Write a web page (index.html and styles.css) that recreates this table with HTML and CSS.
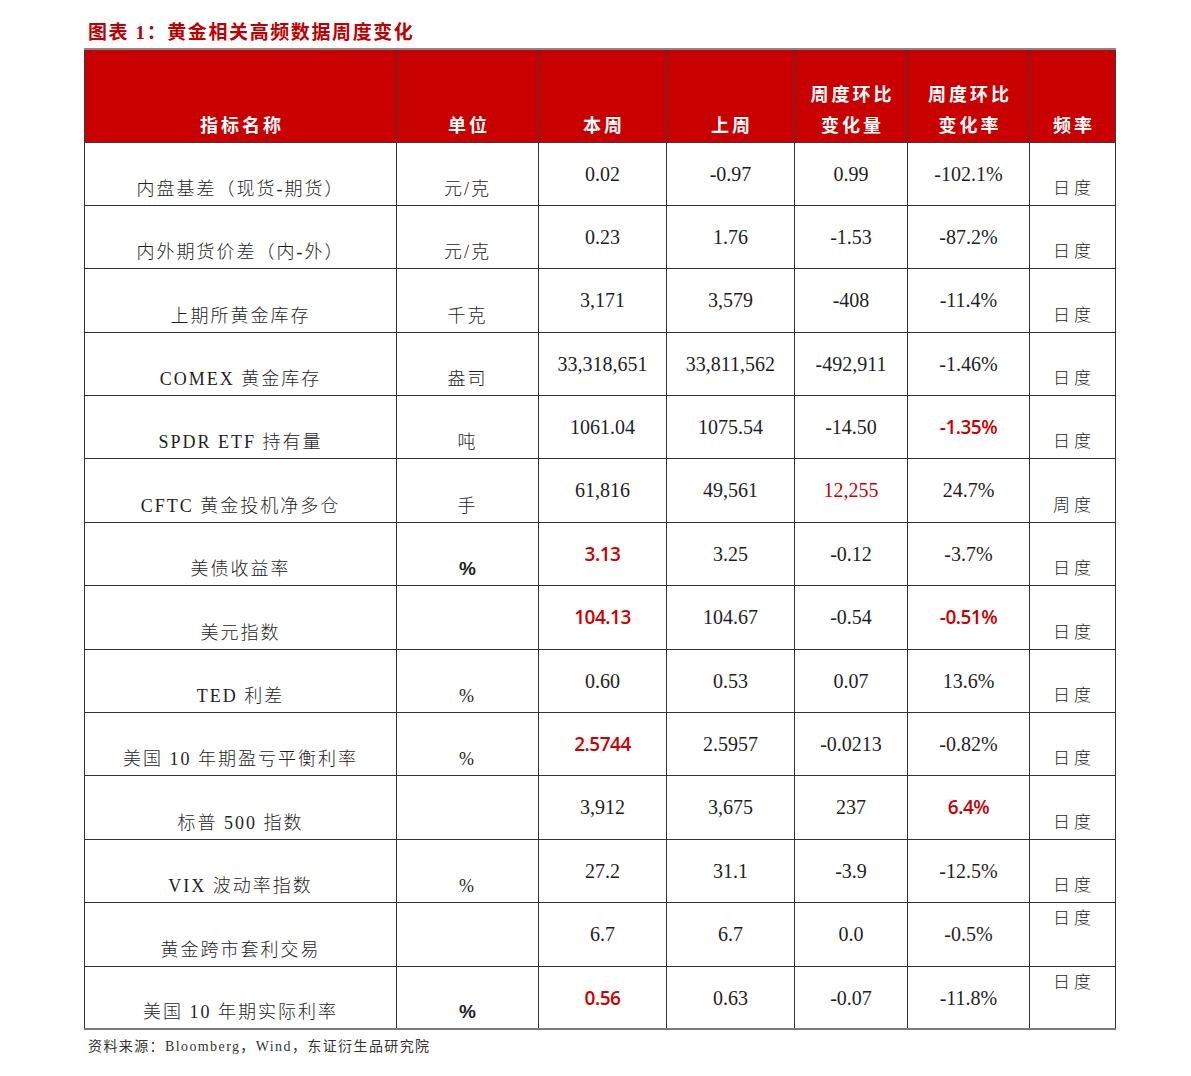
FILE: index.html
```html
<!DOCTYPE html>
<html lang="zh-CN">
<head>
<meta charset="utf-8">
<title>黄金相关高频数据周度变化</title>
<link rel="stylesheet" href="styles.css">
</head>
<body>
<div class="page">
  <div class="caption">图表 1：黄金相关高频数据周度变化</div>
  <table class="data">
    <colgroup>
      <col class="c-name"><col class="c-unit"><col class="c-num"><col class="c-num"><col class="c-chg"><col class="c-pct"><col class="c-freq">
    </colgroup>
    <thead>
      <tr>
        <th>指标名称</th>
        <th>单位</th>
        <th>本周</th>
        <th>上周</th>
        <th>周度环比<br>变化量</th>
        <th>周度环比<br>变化率</th>
        <th>频率</th>
      </tr>
    </thead>
    <tbody>
      <tr><td class="name">内盘基差（现货-期货）</td><td class="unit">元/克</td><td class="num">0.02</td><td class="num">-0.97</td><td class="num">0.99</td><td class="num">-102.1%</td><td class="freq">日度</td></tr>
      <tr><td class="name">内外期货价差（内-外）</td><td class="unit">元/克</td><td class="num">0.23</td><td class="num">1.76</td><td class="num">-1.53</td><td class="num">-87.2%</td><td class="freq">日度</td></tr>
      <tr><td class="name">上期所黄金库存</td><td class="unit">千克</td><td class="num">3,171</td><td class="num">3,579</td><td class="num">-408</td><td class="num">-11.4%</td><td class="freq">日度</td></tr>
      <tr><td class="name">COMEX 黄金库存</td><td class="unit">盎司</td><td class="num">33,318,651</td><td class="num">33,811,562</td><td class="num">-492,911</td><td class="num">-1.46%</td><td class="freq">日度</td></tr>
      <tr><td class="name">SPDR ETF 持有量</td><td class="unit">吨</td><td class="num">1061.04</td><td class="num">1075.54</td><td class="num">-14.50</td><td class="num hl">-1.35%</td><td class="freq">日度</td></tr>
      <tr><td class="name">CFTC 黄金投机净多仓</td><td class="unit">手</td><td class="num">61,816</td><td class="num">49,561</td><td class="num red">12,255</td><td class="num">24.7%</td><td class="freq">周度</td></tr>
      <tr><td class="name">美债收益率</td><td class="unit pct-bold">%</td><td class="num hl">3.13</td><td class="num">3.25</td><td class="num">-0.12</td><td class="num">-3.7%</td><td class="freq">日度</td></tr>
      <tr><td class="name">美元指数</td><td class="unit"></td><td class="num hl">104.13</td><td class="num">104.67</td><td class="num">-0.54</td><td class="num hl">-0.51%</td><td class="freq">日度</td></tr>
      <tr><td class="name">TED 利差</td><td class="unit">%</td><td class="num">0.60</td><td class="num">0.53</td><td class="num">0.07</td><td class="num">13.6%</td><td class="freq">日度</td></tr>
      <tr><td class="name">美国 10 年期盈亏平衡利率</td><td class="unit">%</td><td class="num hl">2.5744</td><td class="num">2.5957</td><td class="num">-0.0213</td><td class="num">-0.82%</td><td class="freq">日度</td></tr>
      <tr><td class="name">标普 500 指数</td><td class="unit"></td><td class="num">3,912</td><td class="num">3,675</td><td class="num">237</td><td class="num hl">6.4%</td><td class="freq">日度</td></tr>
      <tr><td class="name">VIX 波动率指数</td><td class="unit">%</td><td class="num">27.2</td><td class="num">31.1</td><td class="num">-3.9</td><td class="num">-12.5%</td><td class="freq">日度</td></tr>
      <tr><td class="name">黄金跨市套利交易</td><td class="unit"></td><td class="num">6.7</td><td class="num">6.7</td><td class="num">0.0</td><td class="num">-0.5%</td><td class="freq top">日度</td></tr>
      <tr><td class="name">美国 10 年期实际利率</td><td class="unit pct-bold">%</td><td class="num hl">0.56</td><td class="num">0.63</td><td class="num">-0.07</td><td class="num">-11.8%</td><td class="freq top">日度</td></tr>
    </tbody>
  </table>
  <div class="source">资料来源：Bloomberg，Wind，东证衍生品研究院</div>
</div>
</body>
</html>
```

FILE: styles.css
```css
html, body {
  margin: 0;
  padding: 0;
  background: #ffffff;
}

.page {
  padding: 19px 0 0 84px;
  font-family: "Liberation Serif", "Noto Sans CJK SC", serif;
  color: #222;
}

.caption {
  padding-left: 4px;
  height: 29px;
  font-size: 19px;
  font-weight: bold;
  color: #c00000;
  letter-spacing: 1.6px;
  line-height: 28px;
}

.data {
  border-collapse: collapse;
  width: 1031px;
  table-layout: fixed;
  border-top: 2px solid #8a8a8a;
  border-bottom: 2px solid #7a7a7a;
}

.c-name { width: 312px; }
.c-unit { width: 142px; }
.c-num { width: 128px; }
.c-chg { width: 113px; }
.c-pct { width: 122px; }
.c-freq { width: 86px; }

.data thead tr { height: 93px; }
.data tbody tr { height: 63.4px; }

.data th {
  box-sizing: border-box;
  background: #c80000;
  color: #ffffff;
  font-weight: bold;
  font-size: 18px;
  line-height: 31px;
  letter-spacing: 3px;
  vertical-align: bottom;
  padding: 0 0 0 3px;
  border-left: 1px solid #3a3a3a;
  border-right: 1px solid #3a3a3a;
  border-bottom: 1px solid #3a3a3a;
  text-align: center;
}

.data th span { display: block; }

.data td {
  box-sizing: border-box;
  border: 1px solid #333333;
  padding: 0;
  font-size: 20px;
  text-align: center;
  color: #1e1e1e;
}

.data td.name,
.data td.unit {
  vertical-align: bottom;
  padding-bottom: 4px;
  letter-spacing: 2px;
  font-size: 18px;
  font-weight: 300;
  line-height: 24px;
}

.data td.unit.pct-bold {
  font-family: "Liberation Sans", sans-serif;
  font-weight: bold;
  letter-spacing: 0;
  font-size: 19px;
}

.data td.num {
  vertical-align: top;
  padding-top: 19px;
  line-height: 24px;
}

.data td.num.hl {
  color: #cc0000;
  font-family: "Open Sans", sans-serif;
  font-weight: 600;
  font-size: 19px;
  letter-spacing: -0.5px;
}

.data td.num.red {
  color: #cc0000;
}

.data td.freq {
  vertical-align: bottom;
  padding-bottom: 4px;
  padding-left: 3px;
  letter-spacing: 4px;
  font-size: 17px;
  font-weight: 300;
  line-height: 24px;
}

.data td.freq.top {
  vertical-align: top;
  padding-top: 4px;
  padding-bottom: 0;
}

.source {
  padding: 5px 0 0 4px;
  font-size: 14px;
  color: #333;
  letter-spacing: 1.4px;
}
```
